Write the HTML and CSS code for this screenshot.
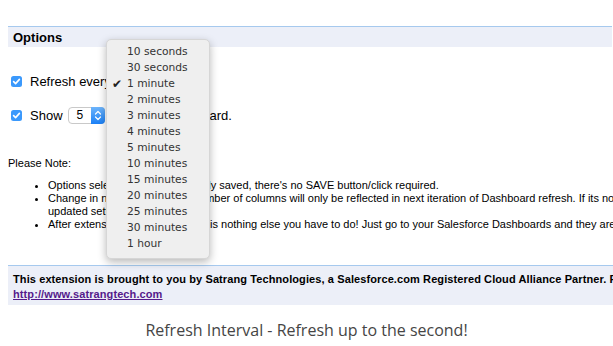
FILE: index.html
```html
<!DOCTYPE html>
<html lang="en">
<head>
  <meta charset="UTF-8" />
  <title>Refresh Interval</title>
  <link rel="stylesheet" href="styles.css">
</head>
<body>

<div class="shot">
  <div class="page">
    <h2 class="bar">Options</h2>

    <div class="opt">
      <span class="check"><svg viewBox="0 0 11 11"><path d="M2.6 5.6 L4.6 7.6 L8.4 3.4" /></svg></span>
      <span>Refresh every</span>
      <span class="select">1 minute<span class="stepper"></span></span>
    </div>

    <div class="opt">
      <span class="check"><svg viewBox="0 0 11 11"><path d="M2.6 5.6 L4.6 7.6 L8.4 3.4" /></svg></span>
      <span>Show</span>
      <span class="select small">5<span class="stepper"><svg viewBox="0 0 14 17"><path d="M4.5 7 L7 4.5 L9.5 7 M4.5 10 L7 12.5 L9.5 10" /></svg></span></span>
      <span class="tail">rows on Dashboard.</span>
    </div>

    <p class="note">Please Note:</p>
    <ul class="notes">
      <li>Options selected are automatically saved, there's no SAVE button/click required.</li>
      <li>Change in number of rows or number of columns will only be reflected in next iteration of Dashboard refresh. If its not reflected, please reload your Dashboard page to see the updated settings in action.</li>
      <li>After extension is installed, there is nothing else you have to do! Just go to your Salesforce Dashboards and they are refreshed automatically.</li>
    </ul>

    <div class="footer">
      <b>This extension is brought to you by Satrang Technologies, a Salesforce.com Registered Cloud Alliance Partner. Please visit us at</b><br>
      <a href="#">http://www.satrangtech.com</a>
    </div>
  </div>

  <ul class="menu">
    <li>10 seconds</li>
    <li>30 seconds</li>
    <li class="on">1 minute</li>
    <li>2 minutes</li>
    <li>3 minutes</li>
    <li>4 minutes</li>
    <li>5 minutes</li>
    <li>10 minutes</li>
    <li>15 minutes</li>
    <li>20 minutes</li>
    <li>25 minutes</li>
    <li>30 minutes</li>
    <li>1 hour</li>
  </ul>
</div>

<p class="caption">Refresh Interval - Refresh up to the second!</p>

</body>
</html>
```

FILE: styles.css
```css
body {
  margin: 0;
  background: #fff;
  color: #000;
  font-family: "Liberation Sans", Arial, sans-serif;
  overflow: hidden;
}
.shot {
  position: relative;
  width: 605px;
  height: 305px;
  margin-left: 8px;
  overflow: hidden;
}
.page {
  width: 896px;
  padding-top: 26px;
}
.bar {
  margin: 0;
  width: 604px;
  height: 21px;
  line-height: 21px;
  padding-left: 5px;
  box-sizing: border-box;
  border-top: 1px solid #a6c9ee;
  background: #eceff8;
  font-size: 13px;
  font-weight: bold;
}
.opt {
  display: flex;
  align-items: center;
  gap: 4px;
  height: 18px;
  margin-left: 3px;
  font-size: 13px;
}
.opt:nth-of-type(1) {
  margin-top: 25px;
}
.opt + .opt {
  margin-top: 16px;
}
.check {
  width: 11px;
  height: 11px;
  border-radius: 2.5px;
  background: #3b99fc;
  margin-right: 4px;
  display: flex;
}
.check svg {
  width: 11px;
  height: 11px;
  fill: none;
  stroke: #fff;
  stroke-width: 1.6;
  stroke-linecap: round;
  stroke-linejoin: round;
}
.select {
  display: flex;
  align-items: center;
  width: 80px;
  height: 17px;
  box-sizing: border-box;
  padding-left: 8px;
  border: 1px solid #c9c9c9;
  border-radius: 4px;
  background: #fff;
  font-size: 12px;
  justify-content: space-between;
  margin-left: 1px;
}
.select.small {
  width: 37px;
}
.tail {
  margin-left: 7px;
}
.stepper {
  width: 14px;
  height: 17px;
  margin: -1px -1px -1px 0;
  border-radius: 0 4px 4px 0;
  background: linear-gradient(#6db4fb, #1a80f6);
  display: flex;
}
.stepper svg {
  width: 14px;
  height: 17px;
  fill: none;
  stroke: #fff;
  stroke-width: 1.2;
  stroke-linecap: round;
  stroke-linejoin: round;
}
.note {
  margin: 33px 0 0;
  font-size: 11px;
}
.notes {
  margin: 10px 0 0;
  padding-left: 40px;
  font-size: 11px;
  line-height: 13px;
}
.footer {
  margin-top: 34px;
  width: 900px;
  height: 40px;
  box-sizing: border-box;
  margin-left: -1px;
  padding: 6px 0 0 6px;
  border-top: 1px solid #a6c9ee;
  background: #eceff8;
  font-size: 11px;
  line-height: 15px;
  letter-spacing: 0.1px;
}
.footer a {
  color: #551a8b;
  font-weight: bold;
}
.menu {
  position: absolute;
  left: 98px;
  top: 39px;
  width: 104px;
  height: 220px;
  box-sizing: border-box;
  margin: 0;
  padding: 4px 0 0;
  list-style: none;
  background: #efefef;
  border: 1px solid #d6d6d6;
  border-radius: 5px;
  box-shadow: 0 3px 9px rgba(0, 0, 0, 0.28);
  font-family: "DejaVu Sans", sans-serif;
  font-size: 10.7px;
  color: #333;
}
.menu li {
  height: 16px;
  line-height: 16px;
  padding-left: 20px;
  position: relative;
}
.menu li.on::before {
  content: "\2714";
  position: absolute;
  left: 5px;
  font-size: 12px;
  color: #222;
}
.caption {
  margin: 14px 0 0;
  text-align: center;
  font-family: "Open Sans", sans-serif;
  font-size: 16px;
  color: #454545;
}
```
